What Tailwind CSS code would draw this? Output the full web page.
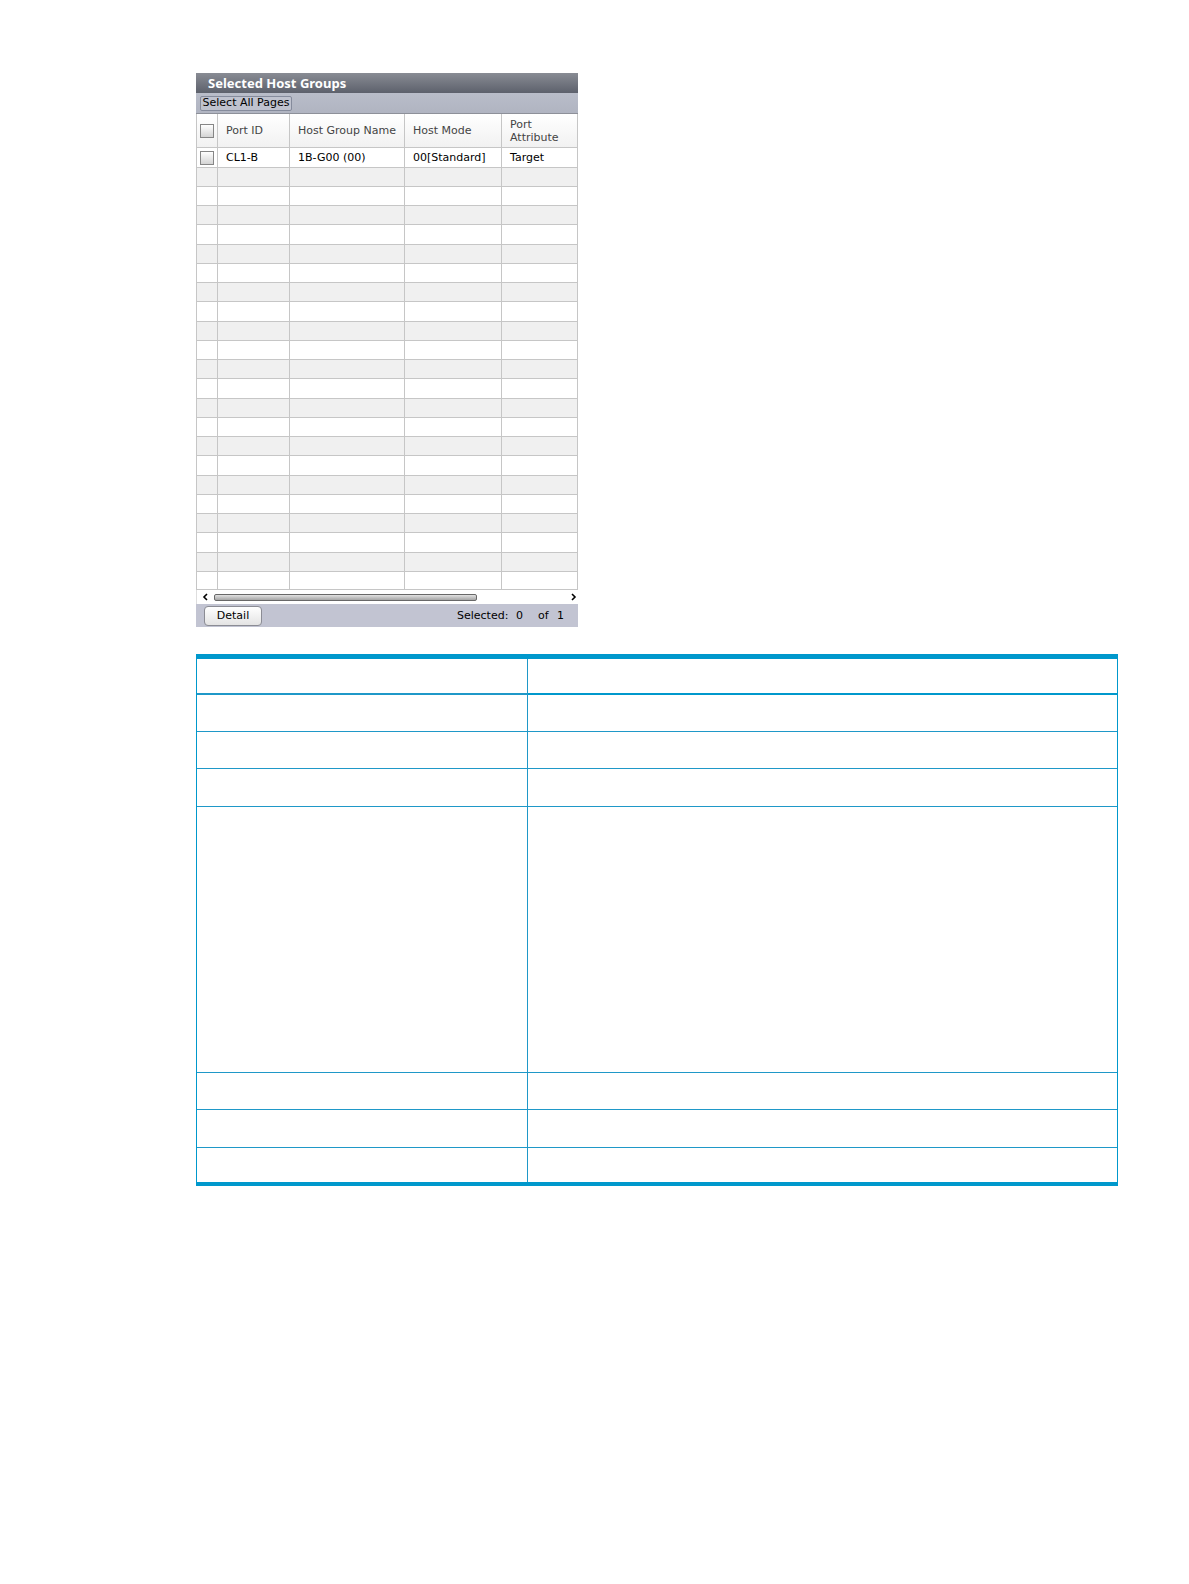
<!DOCTYPE html>
<html lang="en">
<head>
<meta charset="utf-8">
<title>Selected Host Groups</title>
<script src="https://cdn.jsdelivr.net/npm/@tailwindcss/browser@4"></script>
</head>
<body class="min-h-screen bg-white font-['DejaVu_Sans',sans-serif] text-[11px] leading-4 text-black">
<main class="pt-[73px] pr-[71px] pb-16 pl-[196px]">
  <section class="w-[382px]" aria-labelledby="panel-title">
    <h1 id="panel-title" class="h-5 bg-linear-to-b from-[#898c94] to-[#5d616c] pl-3 font-['Noto_Sans',sans-serif] text-[13px] leading-5 font-bold text-white">Selected Host Groups</h1>
    <div class="flex h-[21px] items-center border-b border-[#8d9099] bg-linear-to-b from-[#b9bdc9] to-[#b0b4c1] pl-1">
      <button type="button" class="h-[15px] w-[92px] rounded-xs border border-[#858b9c] bg-[#bfc2ce] text-[11px] leading-3 whitespace-nowrap">Select All Pages</button>
    </div>
    <table class="w-full table-fixed border-separate border-spacing-0 border-l border-[#c6c6c6] text-left [&_td]:border-r [&_td]:border-b [&_td]:border-[#c6c6c6] [&_th]:border-r [&_th]:border-b [&_th]:border-[#c6c6c6]">
      <colgroup><col class="w-[21px]"><col class="w-[72px]"><col class="w-[115px]"><col class="w-[97px]"><col></colgroup>
      <thead>
        <tr class="h-[34px] bg-linear-to-b from-white to-[#f1f1f1] text-[#444] [&>th]:font-normal">
          <th class="pl-[3px]"><input type="checkbox" aria-label="Select all rows" class="block size-[14px] appearance-none border border-[#868686] bg-linear-to-b from-white to-[#d4d4d4]"></th>
          <th class="pl-2">Port ID</th>
          <th class="pl-2 whitespace-nowrap">Host Group Name</th>
          <th class="pl-2">Host Mode</th>
          <th class="pl-2 leading-[13px]">Port<br>Attribute</th>
        </tr>
      </thead>
      <tbody id="rows" class="[&>tr]:h-[19px] [&>tr:nth-child(4n+1)]:h-5 [&>tr:nth-child(even)]:bg-[#f0f0f0] [&>tr:last-child]:h-[18px]">
        <tr>
          <td class="pl-[3px]"><input type="checkbox" aria-label="Select CL1-B" class="block size-[14px] appearance-none border border-[#868686] bg-linear-to-b from-white to-[#d4d4d4]"></td>
          <td class="pl-2">CL1-B</td>
          <td class="pl-2">1B-G00 (00)</td>
          <td class="pl-2 whitespace-nowrap">00[Standard]</td>
          <td class="pl-2">Target</td>
        </tr>
      </tbody>
    </table>
    <div class="flex h-[14px] items-center border-l border-[#dedede] pr-px pl-[5px]">
      <svg class="h-2 w-[6px]" viewBox="0 0 6 8" fill="none" stroke="#000" stroke-width="1.6" aria-hidden="true"><path d="M5 1 2 4l3 3"/></svg>
      <div class="mr-[94px] ml-[6px] h-[7px] flex-1 rounded-xs border border-[#686868] bg-linear-to-b from-[#e2e2e2] to-[#a6a6a6]"></div>
      <svg class="h-2 w-[6px]" viewBox="0 0 6 8" fill="none" stroke="#000" stroke-width="1.6" aria-hidden="true"><path d="m1 1 3 3-3 3"/></svg>
    </div>
    <footer class="flex h-[23px] items-center justify-between bg-[#c2c4d2] pr-[14px] pl-2">
      <button type="button" class="h-5 w-[58px] rounded-sm border border-[#8b8c94] bg-linear-to-b from-white to-[#e4e4e4] text-[11px] leading-4">Detail</button>
      <p class="flex"><span class="w-[59px]">Selected:</span><span class="w-[22px]">0</span><span class="w-[19px]">of</span><span>1</span></p>
    </footer>
  </section>

  <table class="mt-[27px] w-full table-fixed border-separate border-spacing-0 border-x border-t-5 border-b-4 border-[#0098cc] [&_td]:border-b [&_td]:border-[#1f98c8] [&_tr>*:first-child]:border-r [&_tr>*:first-child]:border-[#1f98c8]  [&_tr:last-child>td]:border-b-0">
    <colgroup><col class="w-[36%]"><col></colgroup>
    <thead>
      <tr class="h-9 [&>th]:border-b-2 [&>th]:border-[#0098cc]"><th></th><th></th></tr>
    </thead>
    <tbody>
      <tr class="h-[37px]"><td></td><td></td></tr>
      <tr class="h-[37px]"><td></td><td></td></tr>
      <tr class="h-[38px]"><td></td><td></td></tr>
      <tr class="h-[266px]"><td></td><td></td></tr>
      <tr class="h-[37px]"><td></td><td></td></tr>
      <tr class="h-[38px]"><td></td><td></td></tr>
      <tr class="h-[34px]"><td></td><td></td></tr>
    </tbody>
  </table>
</main>
<script>
  const rows = document.getElementById('rows');
  for (let i = 0; i < 22; i++) {
    const row = rows.insertRow();
    for (let c = 0; c < 5; c++) row.insertCell();
  }
</script>
</body>
</html>
